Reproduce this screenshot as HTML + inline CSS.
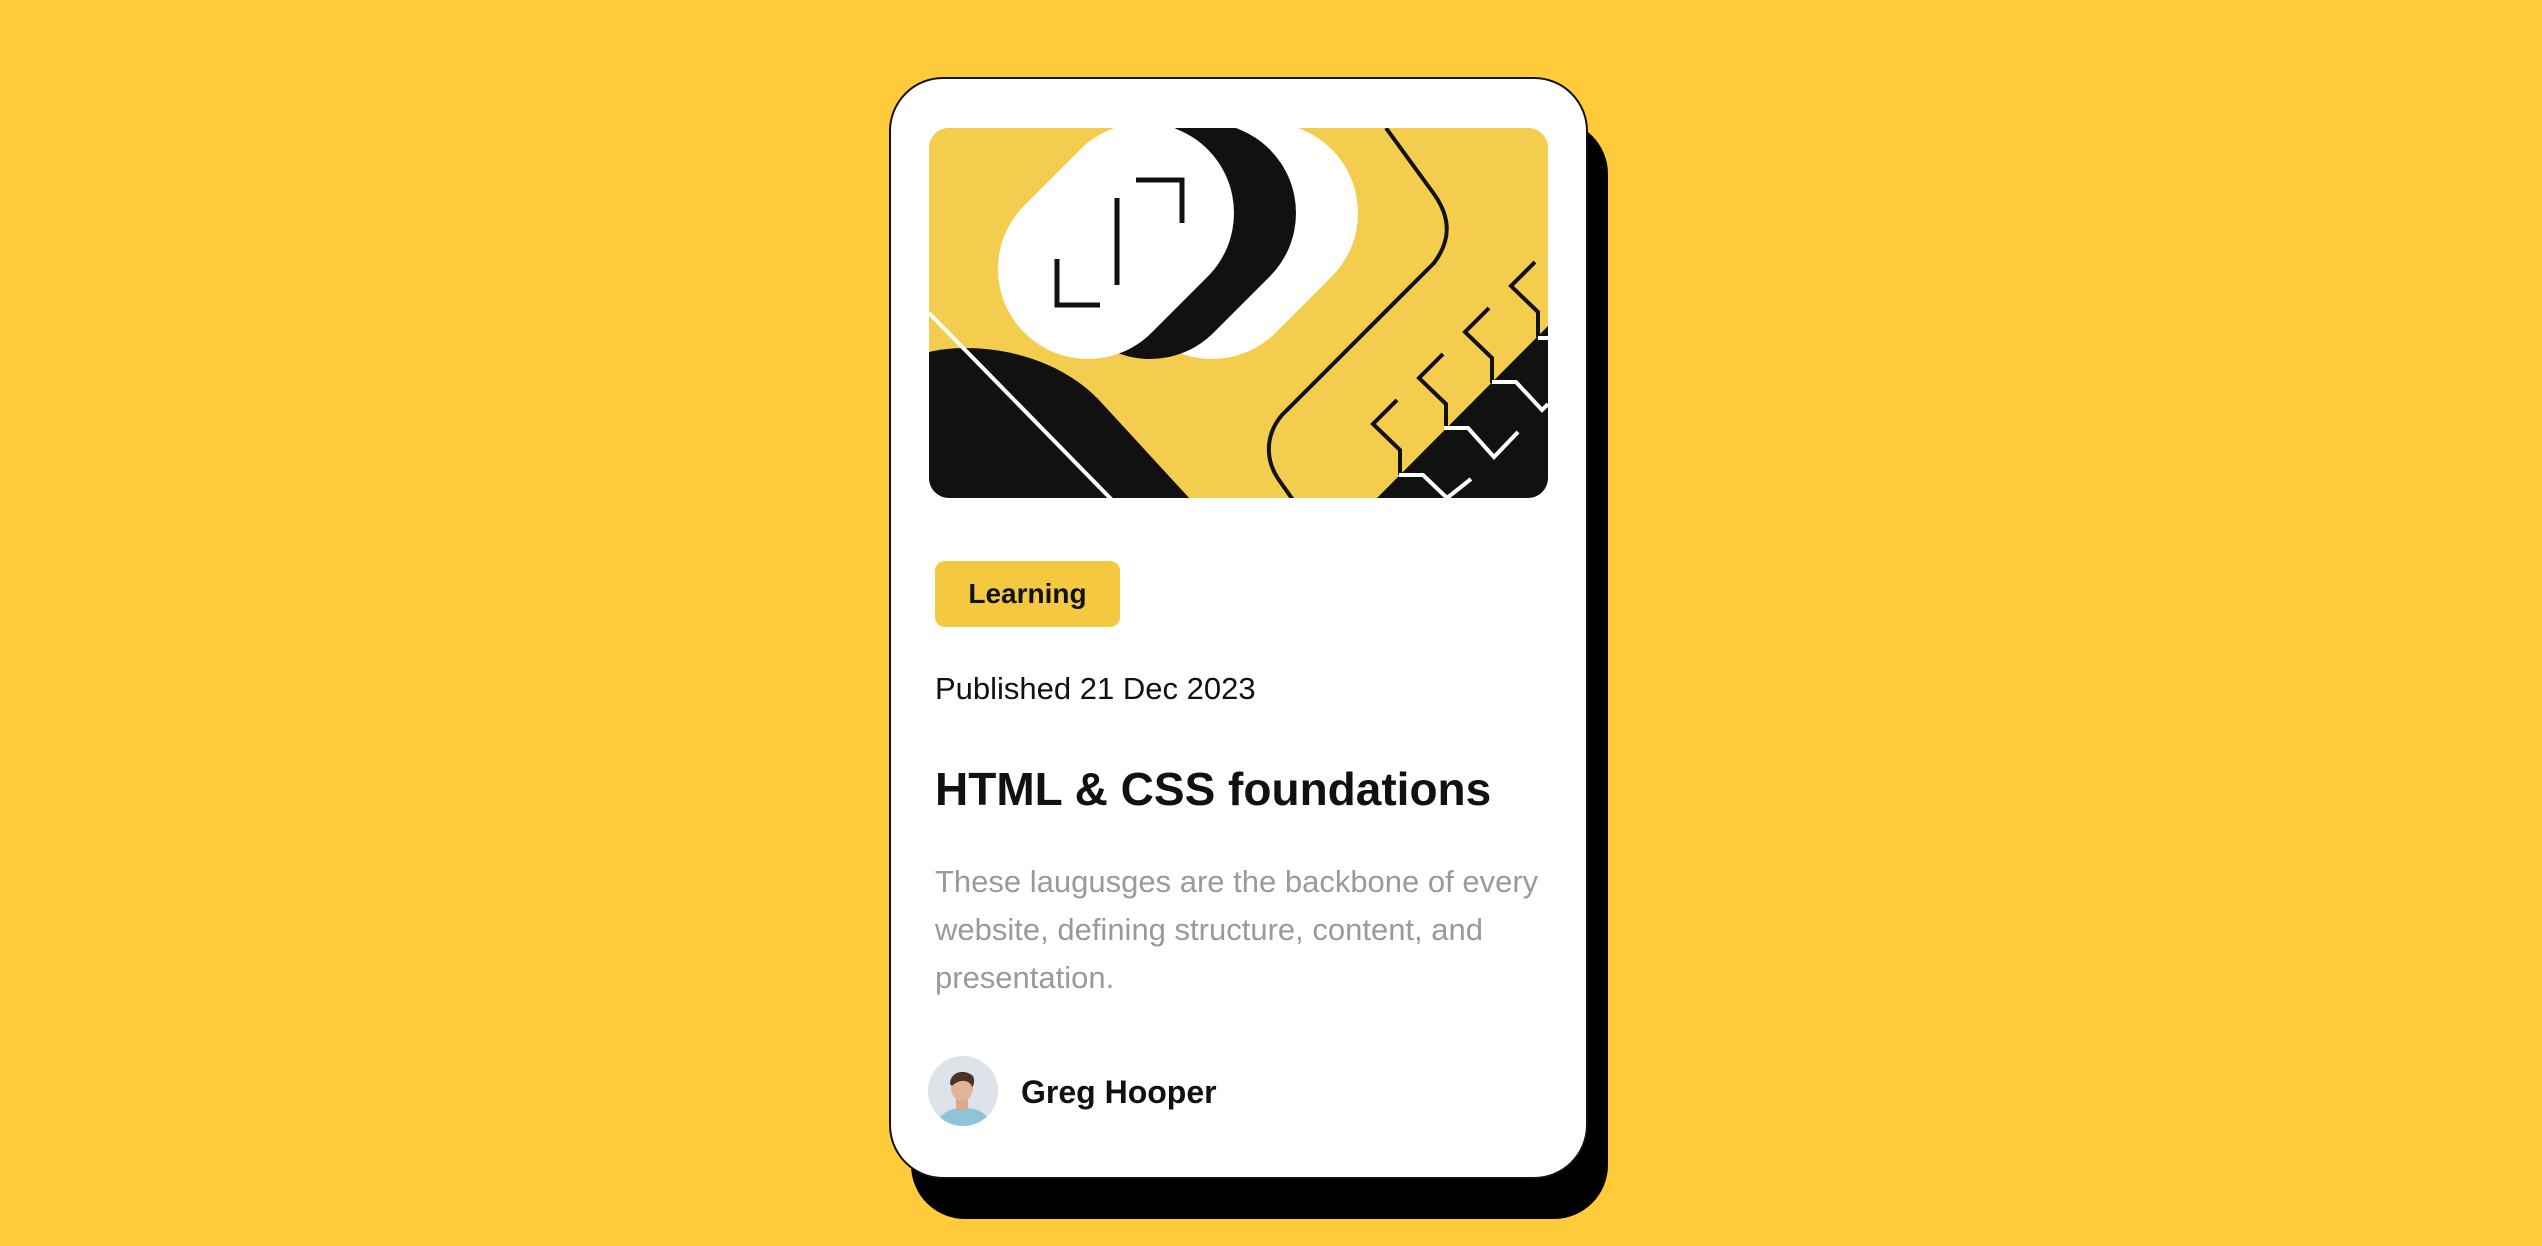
<!DOCTYPE html>
<html><head><meta charset="utf-8"><style>
html,body{margin:0;padding:0}
body{width:2542px;height:1246px;background:#FFCB3B;position:relative;overflow:hidden;font-family:"Liberation Sans",sans-serif}
.shadow{position:absolute;left:911px;top:120px;width:697px;height:1099px;background:#000;border-radius:54px}
.card{position:absolute;left:889px;top:77px;width:695px;height:1098px;background:#fff;border:2px solid #111;border-radius:54px}
.img{position:absolute;left:929px;top:128px;width:619px;height:370px;border-radius:20px;overflow:hidden;background:#F5CD4E}
.tag{position:absolute;left:935px;top:561px;width:185px;height:66px;background:#F4C93F;border-radius:10px;font-weight:bold;font-size:28px;line-height:66px;text-align:center;color:#111}
.t{position:absolute;left:935px;white-space:nowrap;color:#111}
.pub{top:669px;font-size:31px;line-height:40px}
.h{top:760px;font-size:46px;font-weight:bold;line-height:58px}
.p{top:858px;font-size:31px;line-height:48px;color:#9a9a9a}
.av{position:absolute;left:928px;top:1056px;width:70px;height:70px;border-radius:50%;overflow:hidden}
.name{left:1021px;top:1072px;font-size:32px;font-weight:bold;line-height:40px}
</style></head><body>
<div class="shadow"></div>
<div class="card"></div>
<div class="img">
<svg width="619" height="370" viewBox="0 0 619 370">
<rect width="619" height="370" fill="#F5CD4E"/>
<line x1="283" y1="141" x2="339" y2="85" stroke="#fff" stroke-width="180" stroke-linecap="round"/>
<line x1="221" y1="141" x2="277" y2="85" stroke="#111" stroke-width="180" stroke-linecap="round"/>
<line x1="159" y1="141" x2="215" y2="85" stroke="#fff" stroke-width="180" stroke-linecap="round"/>
<g stroke="#111" stroke-width="5" fill="none">
<polyline points="207,52 253,52 253,95"/>
<polyline points="128,131 128,177 171,177"/>
<line x1="188" y1="70" x2="188" y2="157"/>
</g>
<path d="M0,224 C40,214 120,220 170,272 L262,372 L0,372 Z" fill="#111"/>
<line x1="0" y1="185" x2="183" y2="372" stroke="#fff" stroke-width="4"/>
<path d="M457,0 L505,66 C522,90 522,112 505,135 L353,287 C336,307 336,332 350,352 L364,372" fill="none" stroke="#111" stroke-width="4"/>
<path d="M448,370 L619,198 L619,370 Z" fill="#111"/>
<g stroke="#111" stroke-width="4" fill="none">
<polyline points="606,134 582,158 609,184 609,209"/>
<polyline points="560,180 536,204 563,230 563,255"/>
<polyline points="514,226 490,250 517,276 517,301"/>
<polyline points="468,272 444,296 471,322 471,347"/>
</g>
<g stroke="#fff" stroke-width="4" fill="none">
<polyline points="563,254 587,254 613,282 619,276"/>
<polyline points="515,300 539,300 565,329 589,304"/>
<polyline points="470,347 494,347 518,370 542,351"/>
<polyline points="609,210 619,210"/>
</g>
</svg>
</div>
<div class="tag">Learning</div>
<div class="t pub">Published 21 Dec 2023</div>
<div class="t h">HTML &amp; CSS foundations</div>
<div class="t p">These laugusges are the backbone of every<br>website, defining structure, content, and<br>presentation.</div>
<div class="av"><svg width="70" height="70" viewBox="0 0 70 70">
<rect width="70" height="70" fill="#dde3e8"/>
<path d="M8,70 C12,55 25,52 35,52 C48,52 60,56 64,70 Z" fill="#8fc3dc"/>
<rect x="28" y="40" width="12" height="14" fill="#d9a98c"/>
<ellipse cx="34" cy="32" rx="11" ry="13" fill="#e0b497"/>
<path d="M22,28 C22,16 36,12 45,20 C47,24 46,30 44,31 C42,24 32,22 24,30 Z" fill="#4a3426"/>
</svg></div>
<div class="t name">Greg Hooper</div>
</body></html>
